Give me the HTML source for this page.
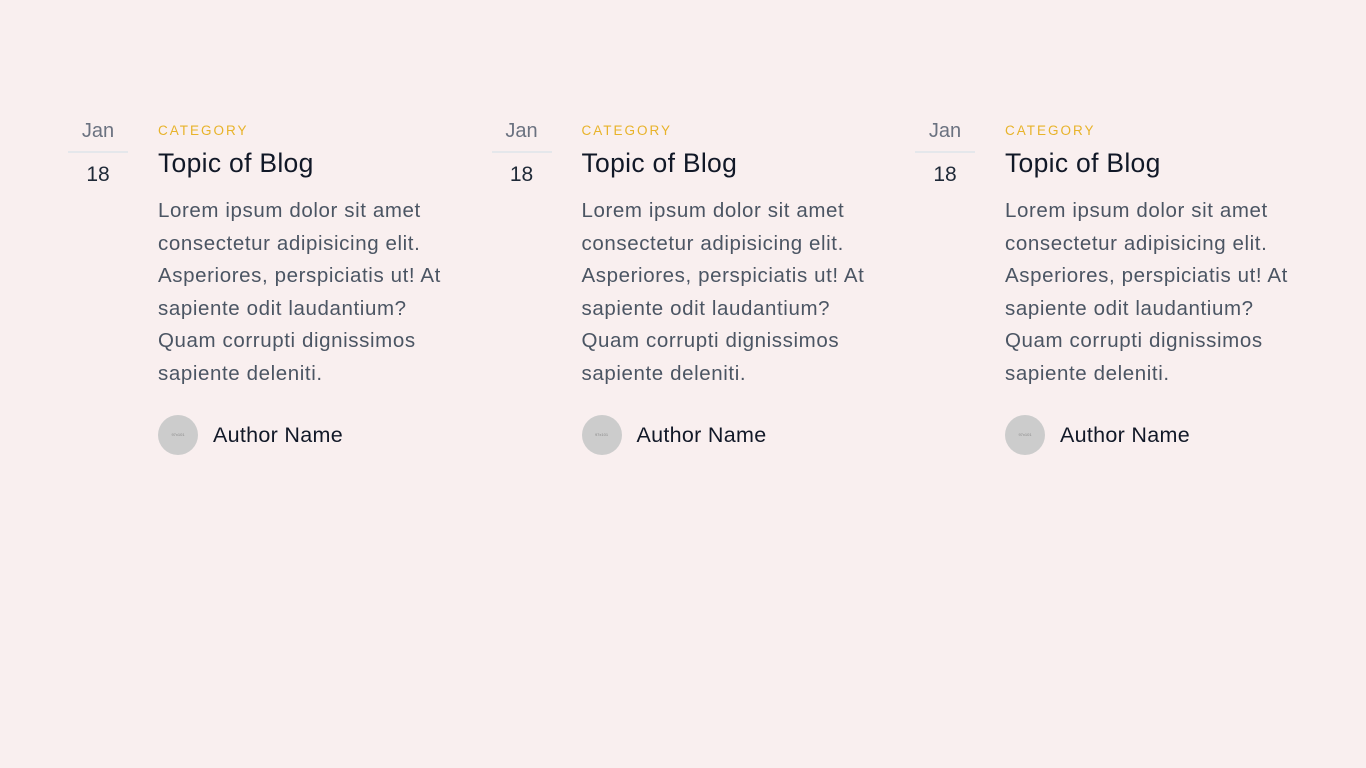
<!DOCTYPE html>
<html><head><meta charset="utf-8"><style>
html,body{margin:0;padding:0;width:1366px;height:768px;background:#f9efef;font-family:"Liberation Sans",sans-serif;overflow:hidden}
.card{position:absolute;top:0;width:420px;height:500px}
.mon{position:absolute;left:68px;width:60px;top:119px;text-align:center;font-size:20px;color:#6b7280;line-height:24px}
.hr{position:absolute;left:68px;width:60px;top:151px;height:2px;background:#e5e7eb}
.day{position:absolute;left:68px;width:60px;top:162px;text-align:center;font-size:21px;color:#1f2937;line-height:26px}
.cat{position:absolute;left:158px;top:122px;font-size:13.5px;letter-spacing:2px;color:#e8b32a;line-height:18px}
.title{position:absolute;left:158px;top:147px;font-size:26.5px;color:#111827;line-height:32px;letter-spacing:0.3px}
.body{position:absolute;left:158px;top:195px;font-size:20.5px;color:#4b5563;line-height:32.6px;letter-spacing:0.6px;white-space:nowrap}
.av{position:absolute;left:158px;top:415px;width:40px;height:40px;border-radius:50%;background:#cccccc;font-size:4px;color:#888;text-align:center;line-height:40px}
.au{position:absolute;left:213px;top:422px;font-size:21.5px;color:#111827;line-height:26px;letter-spacing:0.3px}
</style></head><body>
<div class="card" style="left:0">
<div class="mon">Jan</div><div class="hr"></div><div class="day">18</div>
<div class="cat">CATEGORY</div><div class="title">Topic of Blog</div>
<div class="body">Lorem ipsum dolor sit amet<br>consectetur adipisicing elit.<br>Asperiores, perspiciatis ut! At<br>sapiente odit laudantium?<br>Quam corrupti dignissimos<br>sapiente deleniti.</div>
<div class="av">97x101</div><div class="au">Author Name</div>
</div>
<div class="card" style="left:423.5px">
<div class="mon">Jan</div><div class="hr"></div><div class="day">18</div>
<div class="cat">CATEGORY</div><div class="title">Topic of Blog</div>
<div class="body">Lorem ipsum dolor sit amet<br>consectetur adipisicing elit.<br>Asperiores, perspiciatis ut! At<br>sapiente odit laudantium?<br>Quam corrupti dignissimos<br>sapiente deleniti.</div>
<div class="av">97x101</div><div class="au">Author Name</div>
</div>
<div class="card" style="left:847px">
<div class="mon">Jan</div><div class="hr"></div><div class="day">18</div>
<div class="cat">CATEGORY</div><div class="title">Topic of Blog</div>
<div class="body">Lorem ipsum dolor sit amet<br>consectetur adipisicing elit.<br>Asperiores, perspiciatis ut! At<br>sapiente odit laudantium?<br>Quam corrupti dignissimos<br>sapiente deleniti.</div>
<div class="av">97x101</div><div class="au">Author Name</div>
</div>
</body></html>
